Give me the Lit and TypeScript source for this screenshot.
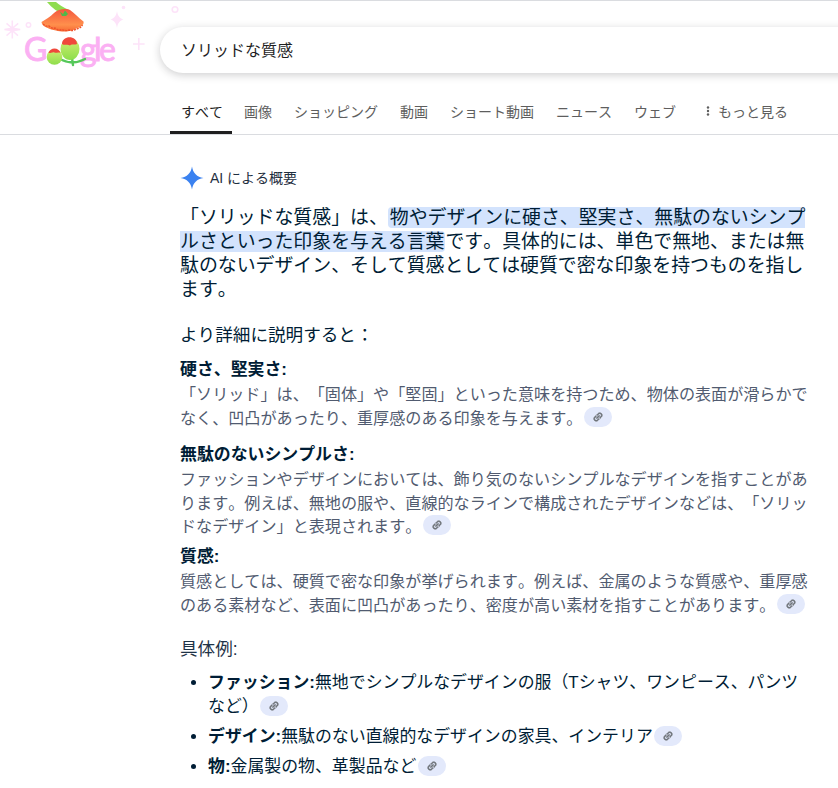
import { LitElement, html, css, svg } from "lit";
import { customElement } from "lit/decorators.js";

const chip = html`<span class="chip"><svg viewBox="0 0 24 24" width="12" height="12"><path transform="rotate(-45 12 12)" fill="#6b7075" stroke="#6b7075" stroke-width="1.200" d="M3.900 12c0-1.710 1.390-3.100 3.100-3.100h4V7H7c-2.760 0-5 2.240-5 5s2.240 5 5 5h4v-1.900H7c-1.710 0-3.100-1.390-3.100-3.100zM8 13h8v-2H8v2zm9-6h-4v1.900h4c1.710 0 3.100 1.390 3.100 3.100s-1.390 3.100-3.100 3.100h-4V17h4c2.760 0 5-2.240 5-5s-2.240-5-5-5z"/></svg></span>`;

const logo = svg`
  <defs>
    <linearGradient id="bell" x1="0" y1="0" x2="0" y2="1"><stop offset="0" stop-color="#f4573f"/><stop offset=".7" stop-color="#ff8f4c"/><stop offset="1" stop-color="#f66a33"/></linearGradient>
    <linearGradient id="bud" x1="0" y1="0" x2="0" y2="1"><stop offset="0" stop-color="#d2ee72"/><stop offset="1" stop-color="#8ede4c"/></linearGradient>
  </defs>
  <g fill="#fde3f9">
    <path d="M11.500 19.500h1.600v6.200l4.600-3.900 1 1.200-4.600 3.700 6.200 1v1.500l-6.200 1 4.400 3.800-1 1.200-4.400-3.900v6.200h-1.600v-6.200l-4.500 3.900-1-1.200 4.500-3.800-6.100-1v-1.500l6.100-1-4.500-3.700 1-1.200 4.500 3.900z"/>
    <path d="M117 10c.8 5 2.500 7 6.500 8.500c-4 1.500-5.700 3.500-6.500 8.500c-.8-5-2.500-7-6.500-8.500c4-1.500 5.700-3.500 6.500-8.500z"/>
    <path d="M138 37h1.600v5.200h5v1.600h-5v5.200H138v-5.200h-5v-1.600h5z"/>
    <circle cx="123.500" cy="6.500" r="1.800"/>
  </g>
  <circle cx="28.500" cy="24" r="2.200" fill="none" stroke="#fde3f9" stroke-width="1.500"/>
  <circle cx="175" cy="8.500" r="2.800" fill="none" stroke="#fde3f9" stroke-width="1.600"/>
  <path d="M47 1 L56 1 C59 4 63 6 69 9 L64 14 C58 11 52 7 47 1Z" fill="#8fdc50"/>
  <path d="M54 12 C58 8 66 7 70 9 C74 12 79 17 83.500 20.500 C84.500 24 80 26.500 76 27.500 C72 31 62 31 56 29.500 C50 28.500 41.500 25.500 41.500 21 C46 18 50 16 54 12Z" fill="url(#bell)"/>
  <path d="M60 10.500l3 2.500 2-3.500 3 3.500-2 2-4 0z" fill="#4fb84a"/>
  <path d="M43 23 q3 3 6 2 q3 3 6 2 q4 3 7 1.500 q4 2 7 .5 q4 1.500 7-1 q4 0 6.500-4" fill="none" stroke="#ee4f2a" stroke-width="1.400" stroke-dasharray="2 1"/>
  <g class="logotext" fill="#fbb0f3" stroke="#fbb0f3" stroke-width=".9">
    <text x="24" y="60" font-size="32">G</text>
    <text x="80" y="60" font-size="32" textLength="36">gle</text>
  </g>
  <path d="M72 50 C72 56 72 60 73 64 M72 61 C68 62 64 60 60 58 M72 61 C76 62 81 60 85 58" fill="none" stroke="#55c85a" stroke-width="2.400" stroke-linecap="round"/>
  <circle cx="54.500" cy="56" r="7.800" fill="url(#bud)"/>
  <path d="M48.500 52 C50 46 59 46 60.500 52 C58 50.500 56 52.500 54.500 51.500 C52.500 50.500 50.500 52.500 48.500 52Z" fill="#f0483c"/>
  <ellipse cx="70" cy="48" rx="9.500" ry="11" fill="url(#bud)"/>
  <path d="M62 43 C62 34 77 34 77 43 C74 44.500 72 42.500 70 44.500 C67 42.500 65 45 62 43Z" fill="#f0483c"/>
`;

const TABS = ["画像", "ショッピング", "動画", "ショート動画", "ニュース", "ウェブ"];

@customElement("app-root")
export class AppRoot extends LitElement {
  static styles = css`
    :host {
      display: block;
      width: 838px;
      height: 788px;
      overflow: hidden;
      background: #fff;
      font-family: "Liberation Sans", "Noto Sans CJK JP", sans-serif;
      color: #001d35;
      font-kerning: none;
      text-spacing-trim: space-all;
    }
    .header {
      border-top: 1px solid #dadce0;
      border-bottom: 1px solid #dadce0;
      box-sizing: border-box;
      height: 135px;
      display: flex;
      flex-direction: column;
    }
    .top { display: flex; align-items: flex-start; height: 90px; }
    .logo { width: 160px; height: 74px; flex: none; overflow: visible; display: block; }
    .logotext { font-family: "Lato", sans-serif; }
    .search {
      flex: 1;
      margin-top: 26px;
      margin-right: -60px;
      height: 46px;
      box-sizing: border-box;
      border-radius: 23px;
      background: #fff;
      box-shadow: 0 2px 8px rgba(32, 33, 36, 0.22);
      display: flex;
      align-items: center;
      padding: 0 0 2px 21px;
      font-size: 16px;
      color: #1f1f1f;
    }
    .tabs { display: flex; margin-left: 170px; flex: 1; font-size: 14px; color: #5e5e5e; }
    .tab { padding: 0 11px; display: flex; align-items: center; border-bottom: 3px solid transparent; }
    .tab.on { color: #1f1f1f; border-bottom-color: #1f1f1f; padding: 0 9px 0 11px; margin-right: 1px; }
    .more { margin-left: 2px; gap: 2px; }
    .more svg { display: block; }
    .content { padding: 31px 30px 0 180px; width: 630px; }
    .ai { display: flex; align-items: center; gap: 6px; font-size: 14px; height: 24px; color: #1f2f3f; }
    .ai span { position: relative; top: -1px; }
    .main { margin: 16px 0 0; font-size: 18.9px; line-height: 24px; }
    mark { background: #d3e3fd; color: inherit; border-radius: 4px; padding: 0 1px 0 2px; }
    .lead { margin: 21px 0 0; font-size: 17.6px; line-height: 24px; }
    .block { margin-top: 11px; font-size: 16.1px; line-height: 23.5px; }
    .block.second { margin-top: 13px; }
    .block.tight { margin-top: 6.5px; }
    .label { font-weight: 700; font-size: 16.9px; line-height: 24px; margin-bottom: 1px; }
    .desc { color: #515b70; }
    .lead2 { margin: 20px 0 0; font-size: 17.6px; line-height: 24px; color: #1f3347; }
    ul { margin: 10px 0 0; padding: 0 0 0 28px; font-size: 16.9px; line-height: 24px; }
    li { margin-bottom: 6px; }
    .chip {
      display: inline-flex;
      align-items: center;
      justify-content: center;
      width: 28px;
      height: 20px;
      margin: -6px 0 -6px 1.5px;
      border-radius: 10px;
      background: #e3e9fb;
      vertical-align: 1px;
      line-height: 0;
    }
    li .chip { vertical-align: 0; }
  `;

  render() {
    return html`
      <div class="header">
        <div class="top">
          <svg class="logo" viewBox="0 0 160 74">${logo}</svg>
          <div class="search">ソリッドな質感</div>
        </div>
        <div class="tabs">
          <div class="tab on">すべて</div>
          ${TABS.map((t) => html`<div class="tab">${t}</div>`)}
          <div class="tab more">
            <svg viewBox="0 0 16 16" width="16" height="16"><g fill="#5e5e5e"><circle cx="8" cy="4.500" r="1.200"/><circle cx="8" cy="8" r="1.200"/><circle cx="8" cy="11.500" r="1.200"/></g></svg>
            もっと見る
          </div>
        </div>
      </div>
      <div class="content">
        <div class="ai">
          <svg viewBox="0 0 24 24" width="24" height="24"><path fill="#3b82f0" d="M12 .5C13 7 17 11 23.500 12C17 13 13 17 12 23.500C11 17 7 13 .5 12C7 11 11 7 12 .5Z"/></svg>
          <span>AI による概要</span>
        </div>
        <p class="main">「ソリッドな質感」は、<mark>物やデザインに硬さ、堅実さ、無駄のないシンプルさといった印象を与える言葉</mark>です。具体的には、単色で無地、または無駄のないデザイン、そして質感としては硬質で密な印象を持つものを指します。</p>
        <p class="lead">より詳細に説明すると：</p>
        <div class="block">
          <div class="label">硬さ、堅実さ:</div>
          <div class="desc">「ソリッド」は、「固体」や「堅固」といった意味を持つため、物体の表面が滑らかでなく、凹凸があったり、重厚感のある印象を与えます。${chip}</div>
        </div>
        <div class="block second">
          <div class="label">無駄のないシンプルさ:</div>
          <div class="desc">ファッションやデザインにおいては、飾り気のないシンプルなデザインを指すことがあります。例えば、無地の服や、直線的なラインで構成されたデザインなどは、「ソリッドなデザイン」と表現されます。${chip}</div>
        </div>
        <div class="block tight">
          <div class="label">質感:</div>
          <div class="desc">質感としては、硬質で密な印象が挙げられます。例えば、金属のような質感や、重厚感のある素材など、表面に凹凸があったり、密度が高い素材を指すことがあります。${chip}</div>
        </div>
        <p class="lead2">具体例:</p>
        <ul>
          <li><b>ファッション:</b>無地でシンプルなデザインの服（Tシャツ、ワンピース、パンツ<br />など）${chip}</li>
          <li><b>デザイン:</b>無駄のない直線的なデザインの家具、インテリア${chip}</li>
          <li><b>物:</b>金属製の物、革製品など${chip}</li>
        </ul>
      </div>
    `;
  }
}
